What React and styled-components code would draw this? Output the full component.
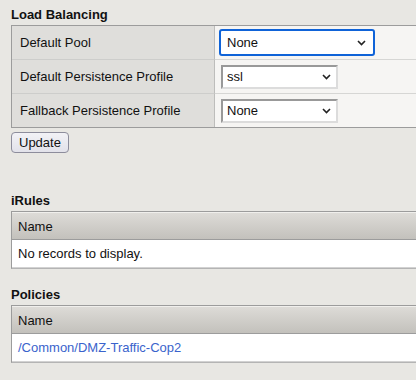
import React from "react";
import styled, { createGlobalStyle } from "styled-components";

const GlobalStyle = createGlobalStyle`
  html, body {
    margin: 0;
    padding: 0;
    background: #e8e7e3;
    overflow: hidden;
  }
  body {
    font-family: "Liberation Sans", Arial, sans-serif;
    font-size: 13px;
    color: #111;
  }
`;

const Page = styled.div`
  padding: 7px 0 0 11px;
`;

const Section = styled.section`
  margin-top: ${(props) => props.$top || 0}px;
`;

const Title = styled.h3`
  margin: 0 0 2px;
  font-size: 13px;
  line-height: 16px;
  font-weight: bold;
  color: #111;
`;

const PropTable = styled.div`
  display: grid;
  grid-template-columns: 203px 1fr;
  border: 1px solid #9c9c9c;
  border-right: none;
`;

const LabelCell = styled.div`
  display: flex;
  align-items: center;
  height: 33px;
  padding-left: 8px;
  background: #dfdedb;
  border-right: 1px solid #bdbdbb;
  border-bottom: ${(props) => (props.$last ? "none" : "1px solid #cdcdcb")};
`;

const ValueCell = styled.div`
  display: flex;
  align-items: center;
  height: 33px;
  padding-left: 6px;
  background: #f6f5f3;
  border-bottom: ${(props) => (props.$last ? "none" : "1px solid #d6d6d4")};
`;

const Select = styled.div`
  box-sizing: border-box;
  display: flex;
  align-items: center;
  justify-content: space-between;
  width: ${(props) => (props.$focused ? 156 : 117)}px;
  height: ${(props) => (props.$focused ? 27 : 24)}px;
  margin-left: ${(props) => (props.$focused ? -2 : 0)}px;
  padding: ${(props) => (props.$focused ? "0 7px 0 6px" : "0 5px 0 4px")};
  background: #fff;
  border: 2px solid;
  border-color: ${(props) =>
    props.$focused ? "#0f63d8" : "#999 #dcdcdc #dcdcdc #999"};
  border-radius: ${(props) => (props.$focused ? 3 : 0)}px;
  box-shadow: ${(props) => (props.$focused ? "inset 0 0 0 1px #fff" : "none")};
  color: #111;
`;

const Button = styled.button`
  display: block;
  margin-top: 4px;
  height: 21px;
  padding: 0 7px;
  font-family: "Liberation Sans", Arial, sans-serif;
  font-size: 13px;
  color: #111;
  background: linear-gradient(#f2f2f6, #e2e2ea);
  border: 1px solid #8d8d9c;
  border-radius: 4px;
`;

const ListTable = styled.div`
  border: 1px solid #9c9c9c;
  border-right: none;
  border-bottom-color: #b4b4b4;
`;

const HeaderRow = styled.div`
  display: flex;
  align-items: center;
  height: 26px;
  padding-left: 6px;
  background: linear-gradient(#dddbd7, #c3c1bc);
  border-top: 1px solid #f0efec;
  border-bottom: 1px solid #9c9c9c;
`;

const BodyRow = styled.div`
  display: flex;
  align-items: center;
  height: 27px;
  padding-left: 6px;
  background: #fff;
  border-bottom: 1px solid #d2d2d2;
`;

const Link = styled.a`
  color: #3a63cc;
  text-decoration: none;
`;

const Chevron = () => (
  <svg width="9" height="6" viewBox="0 0 9 6">
    <polyline
      points="1,1 4.5,4.5 8,1"
      fill="none"
      stroke="#222"
      strokeWidth="1.6"
    />
  </svg>
);

const rows = [
  { label: "Default Pool", value: "None", focused: true },
  { label: "Default Persistence Profile", value: "ssl" },
  { label: "Fallback Persistence Profile", value: "None" },
];

const App = () => (
  <Page>
    <GlobalStyle />
    <Section>
      <Title>Load Balancing</Title>
      <PropTable>
        {rows.map((row, i) => {
          const last = i === rows.length - 1;
          return (
            <React.Fragment key={row.label}>
              <LabelCell $last={last}>{row.label}</LabelCell>
              <ValueCell $last={last}>
                <Select $focused={row.focused}>
                  <span>{row.value}</span>
                  <Chevron />
                </Select>
              </ValueCell>
            </React.Fragment>
          );
        })}
      </PropTable>
      <Button>Update</Button>
    </Section>

    <Section $top={40}>
      <Title>iRules</Title>
      <ListTable>
        <HeaderRow>Name</HeaderRow>
        <BodyRow>No records to display.</BodyRow>
      </ListTable>
    </Section>

    <Section $top={18}>
      <Title>Policies</Title>
      <ListTable>
        <HeaderRow>Name</HeaderRow>
        <BodyRow>
          <Link href="#">/Common/DMZ-Traffic-Cop2</Link>
        </BodyRow>
      </ListTable>
    </Section>
  </Page>
);

export default App;
